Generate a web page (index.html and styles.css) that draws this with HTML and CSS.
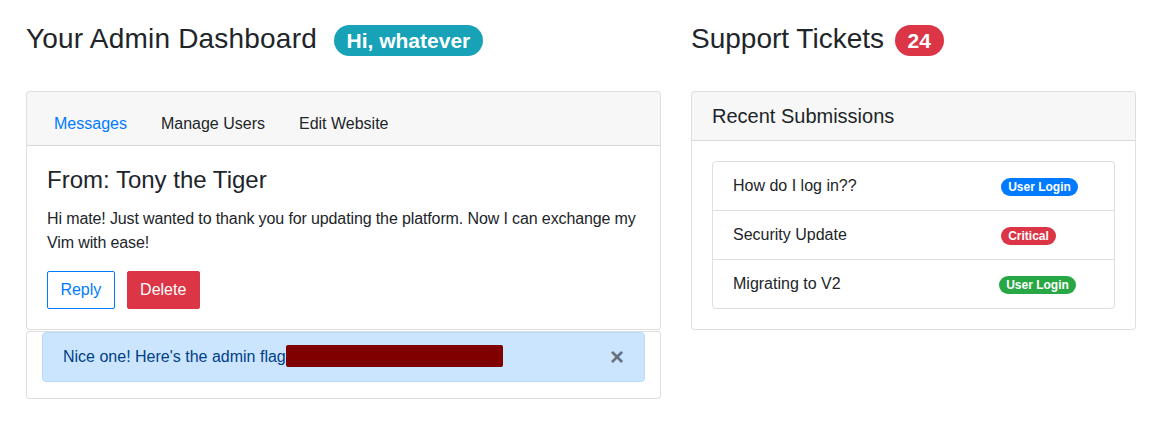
FILE: index.html
```html
<!DOCTYPE html>
<html lang="en">
<head>
<meta charset="utf-8">
<title>Admin Dashboard</title>
<link rel="stylesheet" href="styles.css">
</head>
<body>
<div class="page">
  <section class="column column-main">
    <h3 class="title title-main"><span class="title-text">Your Admin Dashboard</span> <span class="badge badge-pill badge-info badge-hi">Hi, whatever</span></h3>

    <div class="card">
      <div class="card-header">
        <nav class="nav-tabs">
          <a class="nav-link active" href="#">Messages</a>
          <a class="nav-link" href="#">Manage Users</a>
          <a class="nav-link" href="#">Edit Website</a>
        </nav>
      </div>
      <div class="card-body">
        <h4 class="card-title">From: Tony the Tiger</h4>
        <p class="card-text">Hi mate! Just wanted to thank you for updating the platform. Now I can exchange my Vim with ease!</p>
        <div class="actions">
          <button class="btn btn-outline-primary">Reply</button>
          <button class="btn btn-danger">Delete</button>
        </div>
      </div>
    </div>

    <div class="card card-flag">
      <div class="alert alert-primary">
        <span class="alert-text">Nice one! Here's the admin flag<span class="redacted"></span></span>
        <button class="close" aria-label="Close">×</button>
      </div>
    </div>
  </section>

  <section class="column column-side">
    <h3 class="title title-side"><span>Support Tickets</span> <span class="badge badge-pill badge-danger badge-count">24</span></h3>

    <div class="card">
      <div class="card-header">
        <h5 class="card-header-title">Recent Submissions</h5>
      </div>
      <div class="card-body">
        <ul class="list-group">
          <li class="list-group-item"><span>How do I log in??</span><span class="badge badge-pill badge-primary">User Login</span></li>
          <li class="list-group-item"><span>Security Update</span><span class="badge badge-pill badge-danger">Critical</span></li>
          <li class="list-group-item"><span>Migrating to V2</span><span class="badge badge-pill badge-success shift-left">User Login</span></li>
        </ul>
      </div>
    </div>
  </section>
</div>
</body>
</html>
```

FILE: styles.css
```css
* { box-sizing: border-box; }

html, body {
  margin: 0;
  padding: 0;
  background: #ffffff;
}

body {
  font-family: "Liberation Sans", Arial, Helvetica, sans-serif;
  font-size: 16px;
  line-height: 1.5;
  color: #212529;
}

.page {
  display: flex;
  gap: 30px;
  padding-left: 26px;
}

.column-main { width: 635px; }
.column-side { width: 445px; }

.title {
  display: flex;
  align-items: baseline;
  margin: 22px 0 35px;
  font-size: 28px;
  font-weight: 500;
  line-height: 1.2;
  white-space: nowrap;
}

.title-text { letter-spacing: 0.2px; }

.badge {
  display: inline-block;
  font-weight: 700;
  line-height: 1;
  color: #fff;
  white-space: nowrap;
}

.badge-pill {
  padding: 0.25em 0.6em;
  border-radius: 10rem;
}

.badge-hi { font-size: 21px; margin-left: 17px; }
.badge-count { font-size: 21px; margin-left: 11px; }

.badge-info { background: #17a2b8; }
.badge-danger { background: #dc3545; }
.badge-primary { background: #007bff; }
.badge-success { background: #28a745; }

.card {
  background: #fff;
  border: 1px solid rgba(0, 0, 0, 0.125);
  border-radius: 4px;
}

.card-header {
  padding: 12px 20px;
  background: rgba(0, 0, 0, 0.03);
  border-bottom: 1px solid rgba(0, 0, 0, 0.125);
  border-radius: 3px 3px 0 0;
}

.nav-tabs {
  display: flex;
  margin: 0 -10px -11px;
}

.nav-link {
  display: block;
  padding: 8px 17px;
  color: #212529;
  text-decoration: none;
}

.nav-link.active { color: #007bff; }

.card-body { padding: 20px; }

.card-title {
  margin: 0 0 12px;
  font-size: 24px;
  font-weight: 500;
  line-height: 1.2;
}

.card-text {
  margin: 0 0 16px;
  letter-spacing: -0.12px;
}

.actions {
  display: flex;
  gap: 12px;
}

.btn {
  font-family: inherit;
  font-size: 16px;
  line-height: 24px;
  padding: 6px 12.4px;
  border: 1px solid transparent;
  border-radius: 2px;
  cursor: pointer;
}

.btn-outline-primary {
  color: #007bff;
  background: transparent;
  border-color: #007bff;
}

.btn-danger {
  color: #fff;
  background: #dc3545;
  border-color: #dc3545;
}

.card-flag {
  margin-top: 1px;
  padding: 0 15px;
}

.alert {
  display: flex;
  align-items: center;
  margin-bottom: 16px;
  padding: 12px 20px;
  border: 1px solid #b8daff;
  border-radius: 4px;
  color: #004085;
  background: #cce5ff;
}

.alert-text { display: block; }

.redacted {
  display: inline-block;
  width: 217px;
  height: 22px;
  vertical-align: -5px;
  background: #800000;
  border-radius: 2px;
}

.close {
  margin-left: auto;
  padding: 0;
  border: 0;
  background: transparent;
  font-family: inherit;
  font-size: 24px;
  font-weight: 700;
  line-height: 24px;
  color: #000;
  opacity: 0.5;
  cursor: pointer;
}

.card-header-title {
  margin: 0;
  font-size: 20px;
  font-weight: 500;
  line-height: 1.2;
}

.list-group {
  margin: 0;
  padding: 0;
  list-style: none;
  border: 1px solid rgba(0, 0, 0, 0.125);
  border-radius: 4px;
}

.list-group-item {
  display: grid;
  grid-template-columns: 268px auto;
  align-items: baseline;
  padding: 12px 20px;
}

.list-group-item + .list-group-item {
  border-top: 1px solid rgba(0, 0, 0, 0.125);
}

.list-group-item .badge {
  justify-self: start;
  font-size: 12px;
}

.shift-left { margin-left: -2px; }
```
